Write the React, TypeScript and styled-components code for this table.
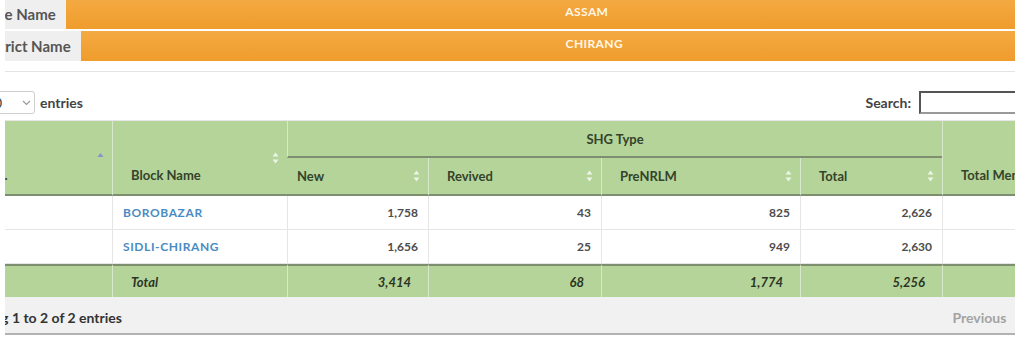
import React from 'react';
import styled, { createGlobalStyle, css } from 'styled-components';

const GlobalStyle = createGlobalStyle`
  html, body {
    margin: 0;
    padding: 0;
    background: #fff;
  }
  body {
    font-family: Lato, "Open Sans", sans-serif;
    overflow: hidden;
  }
`;

// the page is wider than the shot: it is cut on both sides
const Page = styled.div`
  width: 1015px;
  height: 338px;
  overflow: hidden;
`;

const Sheet = styled.div`
  width: 1156px;
  margin-left: -48px;
`;

const cutLeft = css`
  clip-path: inset(-4px 0 0 53px);
`;

const Banner = styled.div`
  ${cutLeft};
  display: flex;
  flex-direction: column;
  gap: 2px;
  margin-top: -1px;
  padding-left: 17px;
`;

const InfoRow = styled.div`
  display: flex;
  height: 30px;
`;

const InfoLabel = styled.div`
  display: flex;
  align-items: center;
  padding: 0 10px 0 9px;
  background: #efefef;
  color: #555;
  font-size: 15px;
  font-weight: 700;
  white-space: nowrap;
`;

const InfoValue = styled.div`
  flex: 1;
  padding-top: 5px;
  background: linear-gradient(#f4aa42, #ef9c2c);
  color: #fff6e6;
  font-size: 12px;
  font-weight: 700;
  letter-spacing: 0.4px;
  text-align: center;
`;

const Rule = styled.hr`
  ${cutLeft};
  margin: 10px 0 0;
  border: 0;
  border-top: 1px solid #e4e4e4;
`;

const Toolbar = styled.div`
  display: flex;
  align-items: center;
  justify-content: space-between;
  height: 23px;
  margin-top: 19px;
  padding: 0 9px 0 33px;
  color: #444;
  font-size: 14px;
  font-weight: 700;
`;

const Length = styled.label`
  display: flex;
  align-items: center;
  gap: 5px;
`;

const FakeSelect = styled.div`
  display: flex;
  align-items: center;
  justify-content: space-between;
  box-sizing: border-box;
  width: 50px;
  height: 23px;
  padding: 0 3px 0 1px;
  border: 1px solid #cfcfcf;
  border-radius: 3px;
  color: #333;
  font-size: 13px;
  font-weight: 400;
`;

const SearchBox = styled.label`
  display: flex;
  align-items: center;
  gap: 8px;
`;

const SearchInput = styled.input`
  box-sizing: border-box;
  width: 180px;
  height: 23px;
  border: 2px solid #666;
  border-color: #555 #999 #999 #555;
  background: #fff;
`;

const TableWrap = styled.div`
  ${cutLeft};
  margin-top: 6px;
  padding-left: 15px;
`;

const Grid = styled.table`
  width: 1141px;
  table-layout: fixed;
  border-collapse: separate;
  border-spacing: 0;
  border-top: 1px solid #e6e6e6;
  font-size: 13px;
`;

const Th = styled.th<{ $span?: boolean; $group?: boolean; $row?: 1 | 2 }>`
  position: relative;
  box-sizing: border-box;
  padding: 0 18px;
  background: #b4d49a;
  color: #35432b;
  font-weight: 700;
  text-align: left;
  white-space: nowrap;
  vertical-align: middle;
  border-left: 1px solid #d8e8ca;
  &:first-child {
    border-left: 0;
    padding-left: 10px;
  }
  ${(p) =>
    p.$row === 1 &&
    css`
      height: 37px;
    `}
  ${(p) =>
    p.$row === 2 &&
    css`
      height: 38px;
      border-bottom: 2px solid #7d8f70;
    `}
  ${(p) =>
    p.$span &&
    css`
      vertical-align: bottom;
      padding-bottom: 11px;
      border-bottom: 2px solid #7d8f70;
    `}
  ${(p) =>
    p.$group &&
    css`
      text-align: center;
      border-bottom: 2px solid #7d8f70;
    `}
`;

const Td = styled.td<{ $num?: boolean }>`
  box-sizing: border-box;
  height: 34px;
  padding: 0 10px;
  border-left: 1px solid #e6e6e6;
  border-bottom: 1px solid #e6e6e6;
  color: #4d4d4d;
  font-size: 12px;
  font-weight: 700;
  text-align: ${(p) => (p.$num ? 'right' : 'left')};
  &:first-child {
    border-left: 0;
  }
`;

const BlockLink = styled.a`
  color: #4a8bc2;
  font-size: 12px;
  font-weight: 700;
  letter-spacing: 0.6px;
  text-decoration: none;
`;

const FootCell = styled.th<{ $num?: boolean }>`
  box-sizing: border-box;
  height: 33px;
  padding: 0 17px 0 18px;
  background: #b4d49a;
  border-top: 2px solid #7d8f70;
  border-left: 1px solid #d8e8ca;
  color: #2c3524;
  font-size: 13px;
  font-style: italic;
  font-weight: 700;
  text-align: ${(p) => (p.$num ? 'right' : 'left')};
  &:first-child {
    border-left: 0;
  }
`;

const SortMark = styled.svg`
  position: absolute;
  top: 50%;
  right: 8px;
  transform: translateY(-50%);
`;

const Footer = styled.div`
  ${cutLeft};
  display: flex;
  align-items: center;
  justify-content: space-between;
  box-sizing: border-box;
  height: 38px;
  padding: 4px 23px 0 3px;
  background: #f1f1f1;
  border-bottom: 2px solid #b2b2b2;
  color: #333;
  font-size: 14px;
  font-weight: 700;
`;

const Pager = styled.div`
  display: flex;
`;

const PageLink = styled.span<{ $current?: boolean }>`
  padding: 0 8px;
  color: ${(p) => (p.$current ? '#333' : '#a3a3a3')};
`;

const SortIcon = ({ asc }: { asc?: boolean }) => (
  <SortMark width="7" height="12" viewBox="0 0 7 12">
    {asc ? (
      <path d="M3.5 1L6.5 5H0.5Z" fill="#8196c9" />
    ) : (
      <path d="M3.5 0.5L6.5 4.5H0.5Z M3.5 11.5L6.5 7.5H0.5Z" fill="#fff" opacity="0.75" />
    )}
  </SortMark>
);

const rows = [
  { no: 1, block: 'BOROBAZAR', fresh: '1,758', revived: '43', pre: '825', total: '2,626' },
  { no: 2, block: 'SIDLI-CHIRANG', fresh: '1,656', revived: '25', pre: '949', total: '2,630' },
];

const widths = [145, 175, 141, 173, 199, 142, 166];

export default function App() {
  return (
    <Page>
      <GlobalStyle />
      <Sheet>
        <Banner>
          <InfoRow>
            <InfoLabel>State Name</InfoLabel>
            <InfoValue>ASSAM</InfoValue>
          </InfoRow>
          <InfoRow>
            <InfoLabel>District Name</InfoLabel>
            <InfoValue>CHIRANG</InfoValue>
          </InfoRow>
        </Banner>
        <Rule />

        <Toolbar>
          <Length>
            <FakeSelect>
              10
              <svg width="9" height="6" viewBox="0 0 9 6">
                <path d="M1 1l3.5 3.5L8 1" fill="none" stroke="#9a9a9a" strokeWidth="1.2" />
              </svg>
            </FakeSelect>
            entries
          </Length>
          <SearchBox>
            Search:
            <SearchInput type="search" />
          </SearchBox>
        </Toolbar>

        <TableWrap>
          <Grid>
            <colgroup>
              {widths.map((w, i) => (
                <col key={i} style={{ width: w }} />
              ))}
            </colgroup>
            <thead>
              <tr>
                <Th rowSpan={2} $span>
                  S.No.
                  <SortIcon asc />
                </Th>
                <Th rowSpan={2} $span>
                  Block Name
                  <SortIcon />
                </Th>
                <Th colSpan={4} $group $row={1}>
                  SHG Type
                </Th>
                <Th rowSpan={2} $span>
                  Total Members
                  <SortIcon />
                </Th>
              </tr>
              <tr>
                {['New', 'Revived', 'PreNRLM', 'Total'].map((h) => (
                  <Th key={h} $row={2}>
                    {h}
                    <SortIcon />
                  </Th>
                ))}
              </tr>
            </thead>
            <tbody>
              {rows.map((r) => (
                <tr key={r.no}>
                  <Td>{r.no}</Td>
                  <Td>
                    <BlockLink href="#">{r.block}</BlockLink>
                  </Td>
                  <Td $num>{r.fresh}</Td>
                  <Td $num>{r.revived}</Td>
                  <Td $num>{r.pre}</Td>
                  <Td $num>{r.total}</Td>
                  <Td $num />
                </tr>
              ))}
            </tbody>
            <tfoot>
              <tr>
                <FootCell />
                <FootCell>Total</FootCell>
                <FootCell $num>3,414</FootCell>
                <FootCell $num>68</FootCell>
                <FootCell $num>1,774</FootCell>
                <FootCell $num>5,256</FootCell>
                <FootCell $num />
              </tr>
            </tfoot>
          </Grid>
        </TableWrap>

        <Footer>
          <span>Showing 1 to 2 of 2 entries</span>
          <Pager>
            <PageLink>Previous</PageLink>
            <PageLink $current>1</PageLink>
            <PageLink>Next</PageLink>
          </Pager>
        </Footer>
      </Sheet>
    </Page>
  );
}
